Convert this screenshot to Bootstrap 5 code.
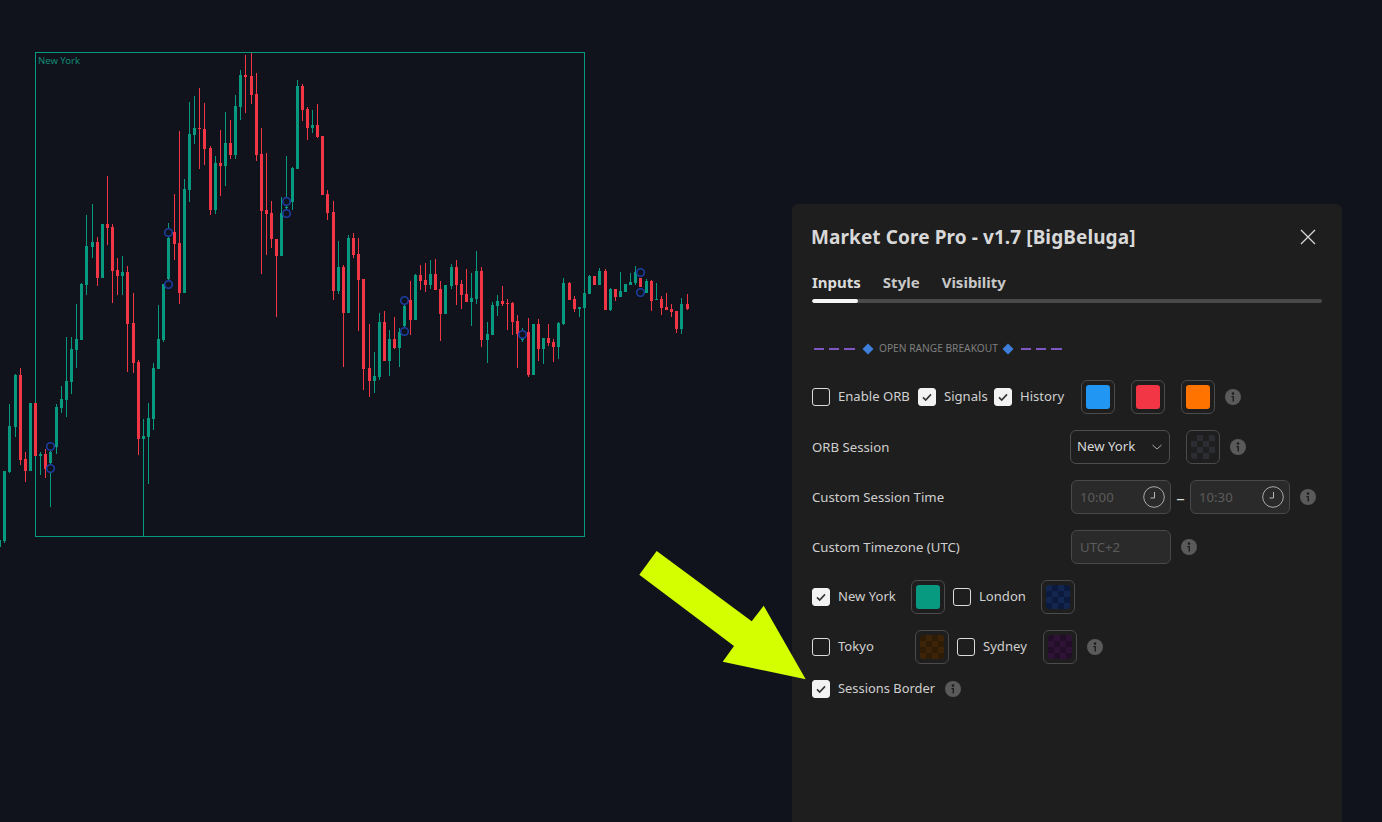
<!doctype html>
<html lang="en"><head><meta charset="utf-8"><title>Market Core Pro</title>
<link href="https://cdn.jsdelivr.net/npm/bootstrap@5.3.0/dist/css/bootstrap.min.css" rel="stylesheet">
<style>
html,body{height:100%;margin:0}
body{background:#10131c;overflow:hidden;font-family:"Noto Sans","Liberation Sans",sans-serif;font-size:14px;color:#cfcfcf}
.stage{height:822px;overflow:hidden}
.chart-svg{width:792px;height:822px;flex:0 0 792px;display:block}
.chart-label{font:9.5px "Noto Sans",sans-serif;fill:#118a75}
.arrow-svg{position:absolute;left:0;top:0;width:1382px;height:822px;pointer-events:none}
.panel{width:550px;flex:0 0 550px;margin-top:204px;height:618px;background:#1e1e1e;border-radius:6px 6px 0 0;padding:0 20px}
.panel-head{height:66px}
.panel-title{font-size:19px;font-weight:700;color:#d8d8d8;margin:0 0 0 -1px;line-height:1;letter-spacing:.09px}
.close-x{background:none;border:0;padding:0;margin-right:6px;line-height:0}
.tab-row{height:29px;gap:22px;padding-bottom:5px}
.tab-item{font-size:15px;font-weight:700;color:#c8c8c8;text-decoration:none;line-height:1}
.tab-item.on{color:#dcdcdc}
.tab-track{height:4px;width:510px;background:#4a4a4a;border-radius:2px}
.tab-fill{width:46px;background:#f5f5f5;border-radius:2px}
.sec-head{height:18px;margin:37px 0 22px 2px;font-size:10.2px;color:#7f7f7f}
.sec-head span{width:119px;margin:0 4px 0 5px;white-space:nowrap}
.rows{gap:16px}
.line{height:34px}
.line-s{height:18px}
.pair{gap:8px;white-space:nowrap;font-size:13.1px;color:#cfcfcf}
.pair-tight{font-size:12.9px}
.form-check-input.ck{width:18px;height:18px;margin:0;flex:0 0 18px;background-color:transparent;border:1px solid #dcdcdc;border-radius:3px;box-shadow:none}
.form-check-input.ck:checked{background-color:#f2f2f2;border-color:#f2f2f2;background-size:14px;background-image:url("data:image/svg+xml,%3Csvg xmlns='http://www.w3.org/2000/svg' viewBox='0 0 14 14'%3E%3Cpath d='M3 7.4l2.7 2.7L11 4.4' fill='none' stroke='%23333' stroke-width='1.6'/%3E%3C/svg%3E")}
.p106{width:106px}.p76{width:76px}.p87{width:87px}.p88{width:88px}.p99{width:99px}.p103{width:103px}.p86{width:86px}
.swatch{width:34px;height:34px;flex:0 0 34px;border:1px solid #4b4b4b;border-radius:6px;padding:4px}
.swatch i{display:block;width:24px;height:24px;border-radius:3px}
.sw-blue{background:#2196f3}.sw-red{background:#f23645}.sw-orange{background:#ff7300}.sw-teal{background:#089981}
.chk{background-size:12px 12px}
.chk-gray{background-color:#1f1f1f;background-image:conic-gradient(#2b2d32 25%,#1f1f1f 0 50%,#2b2d32 0 75%,#1f1f1f 0)}
.chk-navy{background-image:conic-gradient(#0b1a3d 25%,#13264f 0 50%,#0b1a3d 0 75%,#13264f 0)}
.chk-brown{background-image:conic-gradient(#3d2408 25%,#2f1c07 0 50%,#3d2408 0 75%,#2f1c07 0)}
.chk-purple{background-image:conic-gradient(#2e1336 25%,#230e2a 0 50%,#2e1336 0 75%,#230e2a 0)}
.gap10{margin-left:10px}.ml16{margin-left:16px}.ml8{margin-left:8px}
.label-col{width:258px;flex:0 0 258px;font-size:13.2px;color:#cfcfcf;padding-top:1px}
.label-col1{width:259px;flex:0 0 259px;font-size:13.2px;color:#cfcfcf;padding-top:1px}
.info{width:16px;height:16px;flex:0 0 16px;display:block}
.form-select.sel{width:100px;flex:0 0 100px;height:34px;background-color:#1e1e1e;border:1px solid #4e4e4e;border-radius:6px;color:#d8d8d8;font-size:13.2px;padding:0 0 0 6px;box-shadow:none;background-size:12px;background-position:right 6px center;background-image:url("data:image/svg+xml,%3Csvg xmlns='http://www.w3.org/2000/svg' viewBox='0 0 12 12'%3E%3Cpath d='M1.5 4l4.5 4 4.5-4' fill='none' stroke='%23a8a8a8' stroke-width='1'/%3E%3C/svg%3E")}
.fake-input{width:100px;flex:0 0 100px;height:34px}
.form-control.dis{height:34px;background:#2a2a2a;border:1px solid #484848;border-radius:6px;color:#5c5c5c;font-size:13.2px;padding:0 8px;box-shadow:none;opacity:1}
.clock{position:absolute;right:6px;top:6px;width:22px;height:22px}
.dash-sep{width:19px;flex:0 0 19px;text-align:center;color:#d8d8d8;line-height:1;font-size:17px}
</style></head>
<body>
<main class="stage d-flex position-relative">
<svg class="chart-svg" viewBox="0 0 792 822" id="chart" aria-label="Candlestick chart">
<rect x="35.5" y="52.5" width="549" height="484" fill="none" stroke="#089981" stroke-width="1" shape-rendering="crispEdges"/>
<text class="chart-label" x="38" y="64">New York</text>
</svg>
<section class="panel">
<header class="panel-head d-flex align-items-center justify-content-between">
<h1 class="panel-title">Market Core Pro - v1.7 [BigBeluga]</h1>
<button class="close-x" type="button" aria-label="Close"><svg width="16" height="16" viewBox="0 0 16 16"><path d="M1 1l14 14M15 1L1 15" stroke="#d8d8d8" stroke-width="1.3" fill="none"/></svg></button>
</header>
<nav class="d-flex align-items-center tab-row"><a class="tab-item on" href="#">Inputs</a><a class="tab-item" href="#">Style</a><a class="tab-item" href="#">Visibility</a></nav>
<div class="progress tab-track"><div class="progress-bar tab-fill"></div></div>
<div class="sec-head d-flex align-items-center">
<svg width="60" height="12" viewBox="0 0 60 12"><path d="M0 6h10M15 6h10M30 6h11" stroke="#7e57c2" stroke-width="2"/><path d="M54 .5l5.500 5.500-5.500 5.500-5.500-5.500z" fill="#3f7fdb"/></svg>
<span>OPEN RANGE BREAKOUT</span>
<svg width="60" height="12" viewBox="0 0 60 12"><path d="M6 .5l5.500 5.500-5.500 5.500-5.500-5.500z" fill="#3f7fdb"/><path d="M19 6h10M34 6h10M49 6h11" stroke="#7e57c2" stroke-width="2"/></svg>
</div>
<div class="rows d-flex flex-column">
<div class="line d-flex align-items-center">
<label class="pair p106 d-flex align-items-center"><input class="form-check-input ck" type="checkbox">Enable ORB</label>
<label class="pair p76 d-flex align-items-center"><input class="form-check-input ck" type="checkbox" checked>Signals</label>
<label class="pair p87 d-flex align-items-center"><input class="form-check-input ck" type="checkbox" checked>History</label>
<div class="swatch"><i class="sw-blue"></i></div><div class="swatch ml16"><i class="sw-red"></i></div><div class="swatch ml16"><i class="sw-orange"></i></div>
<svg class="info gap10" viewBox="0 0 16 16"><use href="#i"/></svg>
</div>
<div class="line d-flex align-items-center">
<div class="label-col">ORB Session</div>
<select class="form-select sel"><option>New York</option></select>
<div class="swatch ml16"><i class="chk chk-gray"></i></div>
<svg class="info gap10" viewBox="0 0 16 16"><use href="#i"/></svg>
</div>
<div class="line d-flex align-items-center">
<div class="label-col1">Custom Session Time</div>
<div class="fake-input position-relative"><input class="form-control dis" disabled value="10:00"><svg class="clock" viewBox="0 0 22 22"><use href="#c"/></svg></div>
<div class="dash-sep">–</div>
<div class="fake-input position-relative"><input class="form-control dis" disabled value="10:30"><svg class="clock" viewBox="0 0 22 22"><use href="#c"/></svg></div>
<svg class="info gap10" viewBox="0 0 16 16"><use href="#i"/></svg>
</div>
<div class="line d-flex align-items-center">
<div class="label-col1">Custom Timezone (UTC)</div>
<div class="fake-input"><input class="form-control dis" disabled value="UTC+2"></div>
<svg class="info gap10" viewBox="0 0 16 16"><use href="#i"/></svg>
</div>
<div class="line d-flex align-items-center">
<label class="pair p99 d-flex align-items-center"><input class="form-check-input ck" type="checkbox" checked>New York</label>
<div class="swatch"><i class="sw-teal"></i></div>
<label class="pair p88 ml8 d-flex align-items-center"><input class="form-check-input ck" type="checkbox">London</label>
<div class="swatch"><i class="chk chk-navy"></i></div>
</div>
<div class="line d-flex align-items-center">
<label class="pair p103 d-flex align-items-center"><input class="form-check-input ck" type="checkbox">Tokyo</label>
<div class="swatch"><i class="chk chk-brown"></i></div>
<label class="pair p86 ml8 d-flex align-items-center"><input class="form-check-input ck" type="checkbox">Sydney</label>
<div class="swatch"><i class="chk chk-purple"></i></div>
<svg class="info gap10" viewBox="0 0 16 16"><use href="#i"/></svg>
</div>
<div class="line-s d-flex align-items-center">
<label class="pair pair-tight d-flex align-items-center"><input class="form-check-input ck" type="checkbox" checked>Sessions Border</label>
<svg class="info gap10" viewBox="0 0 16 16"><use href="#i"/></svg>
</div>
</div>
</section>
<svg class="arrow-svg" viewBox="0 0 1382 822" aria-hidden="true"><polygon points="656.7,551 639.3,574.7 734,646 722.7,661.7 805.7,679.3 763.7,605.7 751.7,621.3" fill="#d4ff00"/></svg>
<svg width="0" height="0" class="position-absolute"><defs>
<g id="i"><circle cx="8" cy="8" r="8" fill="#5a5a5a"/><circle cx="8" cy="4.6" r="1.3" fill="#1e1e1e"/><path d="M6.4 7h2.6v5.4H7.600V8.200H6.400z" fill="#1e1e1e"/></g>
<g id="c"><circle cx="11" cy="11" r="10.3" fill="none" stroke="#a8a8a8" stroke-width="1"/><path d="M11.500 6v6H7.500" fill="none" stroke="#b8b8b8" stroke-width="1"/></g>
</defs></svg>
</main>
<script>
(function(){
var G='#089981',R='#f23645',A=[
[13,'G',471,471,541,543],[28,'G',404,426,472,473],[46,'G',374,375,427,437],[61,'R',368,375,460,465],[76,'R',452,459,471,482],[91,'G',403,403,471,471],[106,'R',403,403,456,456],[121,'G',452,454,456,475],[136,'R',449,454,469,478],[151,'G',443,452,463,507],[169,'G',404,407,447,454],[184,'G',386,399,408,413],[199,'G',337,381,400,417],[214,'G',337,349,382,394],[229,'G',304,339,350,368],[244,'G',283,284,340,340],
[259,'G',215,246,285,295],[277,'G',204,242,247,258],[292,'R',237,242,278,286],[307,'G',224,224,278,278],[322,'R',176,224,228,245],[337,'R',224,227,271,303],[352,'R',258,270,276,295],[367,'G',256,272,276,295],[382,'R',266,272,324,372],[400,'R',293,323,363,373],[415,'R',360,362,439,455],[430,'G',419,436,439,536],[445,'G',403,418,437,484],[460,'G',363,368,419,430],[475,'G',305,339,369,369],[490,'G',284,284,340,342],[505,'G',223,238,279,284],[522,'R',194,232,244,260],[538,'R',131,243,293,304],[553,'G',179,189,293,293],[568,'G',102,134,190,202],[583,'G',96,128,135,144],[598,'R',88,128,129,169],[613,'R',103,129,149,165],[631,'R',146,148,210,215],[646,'G',156,163,210,214],[661,'R',130,163,166,196],[676,'G',112,143,166,186],[691,'R',120,143,155,159],[706,'G',95,106,155,159],[721,'G',70,75,107,120],[736,'R',55,75,77,113],[754,'R',53,76,95,104],[769,'R',73,94,155,161],[784,'R',128,154,211,274],[799,'R',153,210,214,255],[814,'R',201,213,239,248],[829,'R',239,239,256,317],[844,'G',197,213,256,256],[859,'G',156,207,208,214],[877,'G',167,168,202,210],[892,'G',80,86,169,169],[907,'R',84,86,110,121],[922,'R',107,109,128,140],[937,'G',110,125,128,133],[952,'R',104,125,137,138],[967,'R',136,136,195,195],[982,'R',190,194,213,220],[1000,'R',201,212,291,300],[1015,'G',241,267,291,294],[1030,'R',265,267,313,367],[1045,'G',235,238,313,313]],
B=[[10,'R',233,238,255,258],[25,'R',238,254,280,331],[40,'R',279,279,369,390],[58,'R',324,368,381,397],[73,'G',352,376,381,393],[88,'G',313,322,377,380],[103,'R',311,322,361,361],[118,'G',330,339,361,376],[133,'R',317,339,348,349],[148,'G',328,332,348,367],[163,'G',300,306,326,331],[181,'R',281,300,320,335],[196,'G',274,275,320,320],[211,'R',265,275,281,290],[226,'R',263,280,285,292],[241,'G',260,274,285,289],[256,'R',259,274,290,290],[271,'R',281,289,314,341],[286,'G',285,285,314,314],[304,'G',264,267,286,289],[319,'R',260,267,285,305],[334,'R',280,284,295,309],[349,'R',269,294,302,302],[364,'G',273,298,302,326],[379,'G',251,271,299,304],[394,'R',267,271,340,347],[412,'G',322,334,340,363],[427,'G',302,305,335,335],[442,'G',295,301,306,316],[457,'R',286,301,304,306],[472,'R',299,303,304,330],[487,'R',302,303,322,335],[502,'R',315,321,334,368],[517,'G',328,332,340,342],[535,'R',318,332,375,377],[550,'G',324,324,375,375],[565,'R',319,324,349,361],[580,'G',338,338,349,364],[595,'R',324,338,343,346],[610,'R',339,342,347,362],[625,'G',322,323,347,359],[640,'G',278,283,324,325],[658,'R',282,283,300,300],[673,'R',296,299,309,312],[688,'G',307,307,309,317],[703,'G',293,293,308,308],[718,'G',275,276,294,294],[733,'R',276,276,285,285],[748,'G',268,271,285,285],[766,'R',269,271,310,310],[781,'G',288,289,310,311],[796,'R',289,289,297,301],[811,'G',272,291,297,297],[826,'G',284,284,292,292],[841,'G',273,282,285,285],[856,'G',266,272,283,285],[871,'R',278,278,287,287],[889,'G',279,281,293,293],[904,'R',280,281,301,311],[919,'G',283,299,300,300],[934,'R',296,299,308,315],[949,'R',293,307,310,310],[964,'R',304,309,312,317],[979,'R',311,311,329,333],[994,'G',298,304,329,334],[1012,'R',294,304,309,310]],
O=[[50.5,446.5],[50.5,468.5],[168.5,232.5],[168.5,284.5],[286.5,201.5],[286.5,213.5],[404.5,300.5],[404.5,331.5],[522.5,334.5],[640.5,272.5],[640.5,292.5]],
s=document.getElementById('chart'),h='<rect x="0" y="540" width="1" height="7" fill="'+G+'" shape-rendering="crispEdges"/>';
function add(d,o){d.forEach(function(c){var x=o+Math.floor(c[0]/3),f=c[1]=='G'?G:R;
h+='<path shape-rendering="crispEdges" fill="'+f+'" d="M'+x+' '+c[2]+'h1V'+c[5]+'h-1zM'+(x-1)+' '+c[3]+'h3V'+c[4]+'h-3z"/>';});}
add(A,0);add(B,350);
O.forEach(function(p){h+='<circle cx="'+p[0]+'" cy="'+p[1]+'" r="3.8" fill="#10131c" stroke="#1c3ea3" stroke-width="1.6"/>';});
s.insertAdjacentHTML('beforeend',h);
})();
</script>
<script src="https://cdn.jsdelivr.net/npm/bootstrap@5.3.0/dist/js/bootstrap.bundle.min.js"></script>
</body></html>
